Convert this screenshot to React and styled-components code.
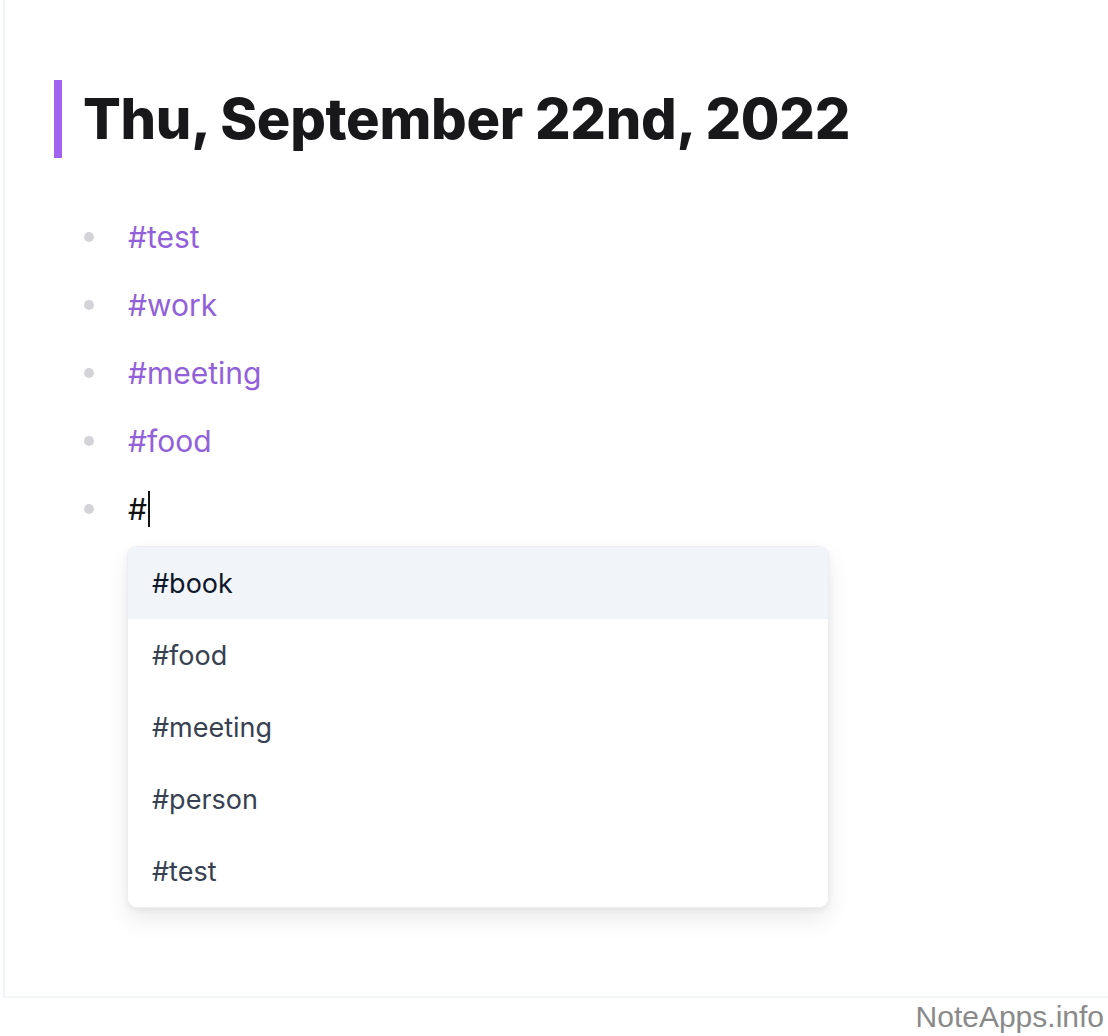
import React from 'react';
import styled, { createGlobalStyle } from 'styled-components';

const GlobalStyle = createGlobalStyle`
  html, body {
    margin: 0;
    padding: 0;
    background: #ffffff;
  }
  body {
    font-family: 'Inter', 'Noto Sans', sans-serif;
  }
`;

const Page = styled.div`
  width: 1108px;
  height: 1036px;
  display: flex;
  flex-direction: column;
  overflow: hidden;
`;

const Editor = styled.div`
  flex: 1;
  margin-left: 3px;
  border-left: 2px solid #f1f4f8;
  border-bottom: 2px solid #f1f4f8;
  padding: 80px 0 0 49px;
`;

const Title = styled.h1`
  margin: 0;
  height: 78px;
  display: flex;
  align-items: center;
  border-left: 8px solid #a162ef;
  padding-left: 21px;
  font-size: 56px;
  font-weight: 800;
  letter-spacing: -0.3px;
  color: #18181b;
`;

const Bullets = styled.ul`
  list-style: none;
  margin: 45px 0 0;
  padding: 0 0 0 30px;
`;

const Item = styled.li`
  height: 68px;
  display: flex;
  align-items: center;
  font-size: 30px;
  color: ${(p) => (p.$tag ? '#9261da' : '#111111')};

  &::before {
    content: '';
    width: 10px;
    height: 10px;
    border-radius: 50%;
    background: #d4d4d8;
    margin-right: 34px;
    flex-shrink: 0;
  }
`;

const Caret = styled.span`
  display: inline-block;
  width: 2px;
  height: 36px;
  background: #111111;
  margin-left: 1px;
  vertical-align: middle;
`;

const Menu = styled.div`
  width: 700px;
  margin: 3px 0 0 73px;
  border-radius: 10px;
  border: 1px solid #eceef2;
  background: #ffffff;
  box-shadow: 0 12px 24px rgba(0, 0, 0, 0.08), 0 2px 6px rgba(0, 0, 0, 0.06);
  overflow: hidden;
`;

const Option = styled.div`
  height: 72px;
  display: flex;
  align-items: center;
  padding-left: 24px;
  font-size: 27px;
  background: ${(p) => (p.$active ? '#f1f4f9' : '#ffffff')};
  color: ${(p) => (p.$active ? '#0f172a' : '#374151')};
`;

const Footer = styled.div`
  height: 38px;
  display: flex;
  justify-content: flex-end;
  align-items: center;
  padding-right: 4px;
  font-family: 'Liberation Sans', Arial, sans-serif;
  font-size: 30px;
  color: #8a8a8a;
`;

const tags = ['test', 'work', 'meeting', 'food'];
const suggestions = ['book', 'food', 'meeting', 'person', 'test'];

export default function App() {
  return (
    <Page>
      <GlobalStyle />
      <Editor>
        <Title>Thu, September 22nd, 2022</Title>
        <Bullets>
          {tags.map((t) => (
            <Item key={t} $tag>#{t}</Item>
          ))}
          <Item>
            #<Caret />
          </Item>
        </Bullets>
        <Menu>
          {suggestions.map((s, i) => (
            <Option key={s} $active={i === 0}>#{s}</Option>
          ))}
        </Menu>
      </Editor>
      <Footer>NoteApps.info</Footer>
    </Page>
  );
}
